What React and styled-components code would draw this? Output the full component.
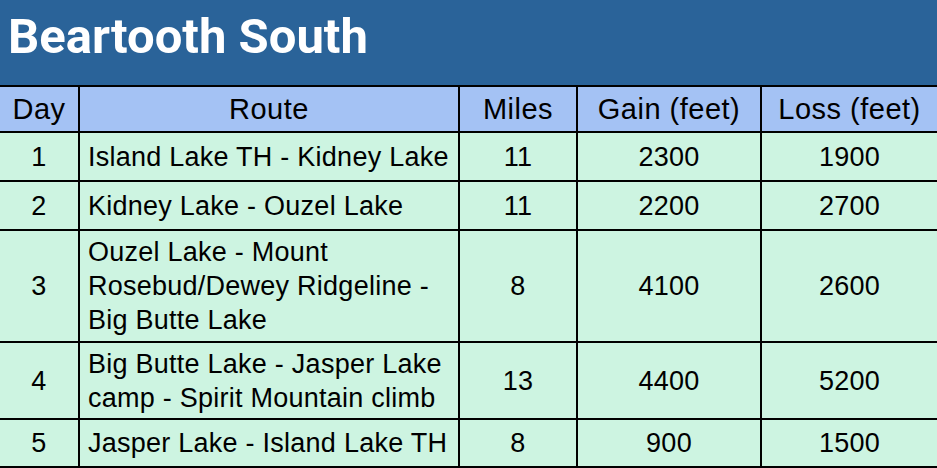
import React from 'react';
import styled, { createGlobalStyle } from 'styled-components';

const GlobalStyle = createGlobalStyle`
  html, body {
    margin: 0;
    padding: 0;
    background: #ffffff;
  }
`;

const Page = styled.div`
  width: 937px;
  height: 468px;
  overflow: hidden;
  font-family: "Liberation Sans", Arial, sans-serif;
  color: #000;
`;

const TitleBar = styled.div`
  height: 85px;
  background-color: #2a6399;
  display: flex;
  align-items: flex-start;
  padding: 6px 0 0 8px;
  box-sizing: border-box;
`;

const Title = styled.h1`
  margin: 0;
  font-family: Roboto, "Liberation Sans", sans-serif;
  font-weight: 700;
  font-size: 49px;
  line-height: 62px;
  color: #ffffff;
`;

const Table = styled.table`
  width: 937px;
  border-collapse: collapse;
  table-layout: fixed;
  font-size: 27px;
`;

const HeadCell = styled.th`
  height: 44px;
  padding: 0;
  font-size: 29px;
  letter-spacing: 0.5px;
  font-weight: 400;
  text-align: center;
  white-space: nowrap;
  background-color: #a4c2f4;
  border: 2px solid #000;
  &:first-child { border-left: none; }
  &:last-child { border-right: none; }
`;

const Cell = styled.td`
  height: ${props => props.h}px;
  padding: 0 ${props => props.left ? '8px' : '0'};
  line-height: 34px;
  letter-spacing: 0.25px;
  white-space: nowrap;
  text-align: ${props => props.left ? 'left' : 'center'};
  background-color: #cdf4e1;
  border: 2px solid #000;
  &:first-child { border-left: none; }
  &:last-child { border-right: none; }
`;

const columns = [
  { title: 'Day', width: 79 },
  { title: 'Route', width: 380 },
  { title: 'Miles', width: 118 },
  { title: 'Gain (feet)', width: 184 },
  { title: 'Loss (feet)', width: 176 },
];

const rows = [
  { day: 1, route: ['Island Lake TH - Kidney Lake'], miles: 11, gain: 2300, loss: 1900, h: 47 },
  { day: 2, route: ['Kidney Lake - Ouzel Lake'], miles: 11, gain: 2200, loss: 2700, h: 47 },
  { day: 3, route: ['Ouzel Lake - Mount', 'Rosebud/Dewey Ridgeline -', 'Big Butte Lake'], miles: 8, gain: 4100, loss: 2600, h: 110 },
  { day: 4, route: ['Big Butte Lake - Jasper Lake', 'camp - Spirit Mountain climb'], miles: 13, gain: 4400, loss: 5200, h: 75 },
  { day: 5, route: ['Jasper Lake - Island Lake TH'], miles: 8, gain: 900, loss: 1500, h: 46 },
];

const App = () => (
  <Page>
    <GlobalStyle />
    <TitleBar>
      <Title>{'Beartooth South'}</Title>
    </TitleBar>
    <Table>
      <colgroup>
        { columns.map(c => <col key={c.title} style={{ width: c.width }} />) }
      </colgroup>
      <thead>
        <tr>
          { columns.map(c => <HeadCell key={c.title}>{c.title}</HeadCell>) }
        </tr>
      </thead>
      <tbody>
        { rows.map(r => (
          <tr key={`day-${r.day}`}>
            <Cell h={r.h}>{r.day}</Cell>
            <Cell h={r.h} left>
              { r.route.map((t, i) => <div key={`rt-${r.day}-${i}`}>{t}</div>) }
            </Cell>
            <Cell h={r.h}>{r.miles}</Cell>
            <Cell h={r.h}>{r.gain}</Cell>
            <Cell h={r.h}>{r.loss}</Cell>
          </tr>
        )) }
      </tbody>
    </Table>
  </Page>
);

export default App;
